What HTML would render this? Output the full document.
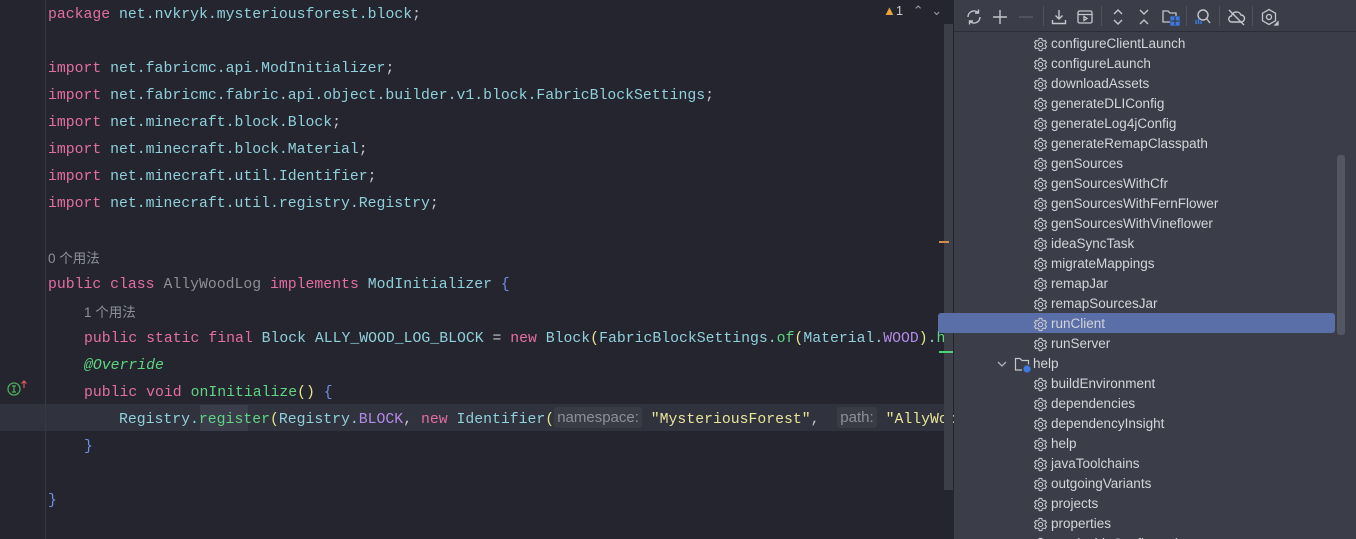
<!DOCTYPE html>
<html style="width:1356px;height:539px;overflow:hidden"><head><meta charset="utf-8"><style>
*{margin:0;padding:0;box-sizing:border-box}
body{width:1356px;height:539px;overflow:hidden;background:#24252e;position:relative;font-family:"Liberation Sans","Noto Sans CJK SC",sans-serif}
#ed{position:absolute;left:0;top:0;width:954px;height:539px;background:#24252e;overflow:hidden}
#gut{position:absolute;left:45px;top:0;width:1px;height:539px;background:#363845}
.ln{position:absolute;left:48px;height:27px;line-height:27px;margin-top:2px;font-family:"Liberation Mono","Noto Sans CJK SC",monospace;font-size:14.8px;color:#8fd0dc;white-space:pre}
.k{color:#e46ea4}.c{color:#8fd0dc}.g{color:#8e8e96}.m{color:#5fd583}.y{color:#e6e48b}.p{color:#b48be8}.b{color:#6f8ee6}.w{color:#c6c6cc}
.s{color:#e8e49a}
.hint{font-family:"Liberation Sans","Noto Sans CJK SC",sans-serif;color:#8d8f99;font-size:13.5px}
.hb{display:inline-block;background:#393b45;border-radius:3px;padding:0 3px;height:21px;line-height:21px;color:#8d8f99;font-family:"Liberation Sans",sans-serif;font-size:15px;vertical-align:1px}
#cur{position:absolute;left:0;top:404px;width:944px;height:27px;background:#30323d}
#sb{position:absolute;left:944px;top:24px;width:9px;height:466px;background:#3c3e48}
#panel{position:absolute;left:954px;top:0;width:402px;height:539px;background:#3b3d48}
#tb{position:absolute;left:0;top:0;width:402px;height:32px;border-bottom:1px solid #2c2d35}
.ic{position:absolute;top:8px}
.sep{position:absolute;top:6px;width:1px;height:20px;background:#4f515c}
.row{position:absolute;height:20px;line-height:20px;font-size:13.5px;color:#d4d5da;white-space:nowrap}
.row svg{position:absolute;left:-18px;top:3px}
#sel{position:absolute;left:938px;top:313px;width:397px;height:20px;background:#5a6ea8;border-radius:3px}
#psb{position:absolute;left:1337px;top:155px;width:8px;height:180px;background:#545663;border-radius:3px}
#tree{position:absolute;left:0;top:0;width:1356px;height:539px;overflow:hidden}
</style></head><body>
<div id="ed">
<div id="cur"></div>
<div style="position:absolute;left:200px;top:405px;width:48px;height:26px;background:#3b3d4a"></div>
<div id="gut"></div>
<div class="ln" style="top:0"><span class="k">package</span> net.nvkryk.mysteriousforest.block<span class="w">;</span></div>
<div class="ln" style="top:54px"><span class="k">import</span> net.fabricmc.api.ModInitializer<span class="w">;</span></div>
<div class="ln" style="top:81px"><span class="k">import</span> net.fabricmc.fabric.api.object.builder.v1.block.FabricBlockSettings<span class="w">;</span></div>
<div class="ln" style="top:108px"><span class="k">import</span> net.minecraft.block.Block<span class="w">;</span></div>
<div class="ln" style="top:135px"><span class="k">import</span> net.minecraft.block.Material<span class="w">;</span></div>
<div class="ln" style="top:162px"><span class="k">import</span> net.minecraft.util.Identifier<span class="w">;</span></div>
<div class="ln" style="top:189px"><span class="k">import</span> net.minecraft.util.registry.Registry<span class="w">;</span></div>
<div class="ln hint" style="top:243px">0 个用法</div>
<div class="ln" style="top:270px"><span class="k">public class</span> <span class="g">AllyWoodLog</span> <span class="k">implements</span> ModInitializer <span class="b">{</span></div>
<div class="ln hint" style="top:297px;left:84px">1 个用法</div>
<div class="ln" style="top:324px;left:84px"><span class="k">public static final</span> Block ALLY_WOOD_LOG_BLOCK <span class="w">=</span> <span class="k">new</span> Block<span class="y">(</span>FabricBlockSettings.<span class="m">of</span><span class="y">(</span>Material.<span class="p">WOOD</span><span class="y">)</span>.<span class="m">h</span></div>
<div class="ln" style="top:351px;left:84px"><span class="m"><i>@Override</i></span></div>
<div class="ln" style="top:378px;left:84px"><span class="k">public void</span> <span class="m">onInitialize</span><span class="y">()</span> <span class="b">{</span></div>
<div class="ln" style="top:405px;left:119px">Registry.<span class="m">register</span><span class="y">(</span>Registry.<span class="p">BLOCK</span><span class="w">,</span> <span class="k">new</span> Identifier<span class="y">(</span><span class="hb">namespace:</span> <span class="s">"MysteriousForest"</span><span class="w">,</span>  <span class="hb">path:</span> <span class="s">"AllyWood</span></div>
<div class="ln" style="top:432px;left:84px"><span class="b">}</span></div>
<div class="ln" style="top:486px"><span class="b">}</span></div>
<svg style="position:absolute;left:6px;top:379px" width="22" height="18"><circle cx="8" cy="10" r="6" fill="none" stroke="#4faa5a" stroke-width="1.3"/><path d="M6 7h4M8 7v6M6 13h4" stroke="#4faa5a" stroke-width="1.2"/><path d="M18 9V2M15.5 4.5L18 2l2.5 2.5" stroke="#e05a5a" stroke-width="1.2" fill="none"/></svg>
<div id="sb"></div>
<div style="position:absolute;left:939px;top:241px;width:10px;height:2px;background:#d98c4a"></div>
<div style="position:absolute;left:939px;top:351px;width:14px;height:2px;background:#4fd07a"></div>
<div style="position:absolute;left:883px;top:3px;font-size:13px;color:#c8c9ce"><span style="color:#e8a33a">▲</span>1 <span style="color:#9a9ba3;margin-left:6px">⌃</span> <span style="color:#9a9ba3;margin-left:4px">⌄</span></div>
</div>
<div id="panel">
<div id="tb">
<svg class="ic" style="left:11px" width="18" height="18" fill="none" stroke="#c5c6cc" stroke-width="1.4"><path d="M3 9a6 6 0 0 1 10.5-4M15 9a6 6 0 0 1-10.5 4"/><path d="M13.5 1.5v3.5H10M4.5 16.5V13H8"/></svg>
<svg class="ic" style="left:37px" width="18" height="18" stroke="#c5c6cc" stroke-width="1.4"><path d="M9 2v14M2 9h14"/></svg>
<svg class="ic" style="left:63px" width="18" height="18" stroke="#5a5c66" stroke-width="1.4"><path d="M2 9h14"/></svg>
<div class="sep" style="left:89px"></div>
<svg class="ic" style="left:96px" width="18" height="18" fill="none" stroke="#c5c6cc" stroke-width="1.4"><path d="M9 2v9M5.5 7.5L9 11l3.5-3.5M2.5 12v3.5h13V12"/></svg>
<svg class="ic" style="left:122px" width="18" height="18" fill="none" stroke="#c5c6cc" stroke-width="1.3"><rect x="2" y="3" width="14" height="12" rx="1.5"/><path d="M2 6.5h14M8 8.5v4l3-2z"/></svg>
<div class="sep" style="left:147px"></div>
<svg class="ic" style="left:155px" width="18" height="18" fill="none" stroke="#c5c6cc" stroke-width="1.4"><path d="M5 6l4-4 4 4M5 12l4 4 4-4"/></svg>
<svg class="ic" style="left:181px" width="18" height="18" fill="none" stroke="#c5c6cc" stroke-width="1.4"><path d="M5 2l4 4 4-4M5 16l4-4 4 4"/></svg>
<svg class="ic" style="left:207px" width="20" height="18" fill="none" stroke="#c5c6cc" stroke-width="1.3"><path d="M9 14H2V3h5l2 2h6v3"/><rect x="10" y="9" width="8" height="8" fill="#3b7ae0" stroke="#3b7ae0"/><path d="M14 9v8M10 13h8" stroke="#3b3d48"/></svg>
<div class="sep" style="left:232px"></div>
<svg class="ic" style="left:239px" width="18" height="18" fill="none" stroke="#c5c6cc" stroke-width="1.4"><circle cx="10" cy="7" r="5"/><path d="M13.5 10.5L17 15"/><path d="M3 16v-4M5.5 16v-6M8 16v-3" stroke="#3b7ae0"/></svg>
<div class="sep" style="left:265px"></div>
<svg class="ic" style="left:273px" width="20" height="18" fill="none" stroke="#c5c6cc" stroke-width="1.4"><path d="M5 14h9a3.5 3.5 0 0 0 0-7 5 5 0 0 0-9.5 1A3 3 0 0 0 5 14z"/><path d="M2 2l15 15"/></svg>
<div class="sep" style="left:298px"></div>
<svg class="ic" style="left:306px" width="20" height="18" fill="none" stroke="#c5c6cc" stroke-width="1.3"><path d="M9 1.5l6.5 3.7v7.6L9 16.5l-6.5-3.7V5.2z"/><circle cx="9" cy="9" r="2.5"/><path d="M15 17l3-3v3z" fill="#c5c6cc"/></svg>
</div>
</div>
<div id="sel"></div>
<div id="psb"></div>
<div id="tree"></div>
<script>
var items=[["configureClientLaunch",1],["configureLaunch",1],["downloadAssets",1],["generateDLIConfig",1],["generateLog4jConfig",1],["generateRemapClasspath",1],["genSources",1],["genSourcesWithCfr",1],["genSourcesWithFernFlower",1],["genSourcesWithVineflower",1],["ideaSyncTask",1],["migrateMappings",1],["remapJar",1],["remapSourcesJar",1],["runClient",1],["runServer",1],["help",0],["buildEnvironment",1],["dependencies",1],["dependencyInsight",1],["help",1],["javaToolchains",1],["outgoingVariants",1],["projects",1],["properties",1],["resolvableConfigurations",1]];
var gear='<svg width="15" height="15" viewBox="0 0 16 16" fill="none" stroke="#c5c6cc" stroke-width="1.2"><path d="M6.6 1.5h2.8l.4 1.9 1.4.8 1.8-.6 1.4 2.4-1.4 1.3v1.4l1.4 1.3-1.4 2.4-1.8-.6-1.4.8-.4 1.9H6.6l-.4-1.9-1.4-.8-1.8.6-1.4-2.4 1.4-1.3V7.3L1.6 6l1.4-2.4 1.8.6 1.4-.8z"/><circle cx="8" cy="8" r="2.3"/></svg>';
var h='';items.forEach(function(it,i){var y=34+i*20;
if(it[1])h+='<div class="row" style="left:1051px;top:'+y+'px">'+gear+it[0]+'</div>';
else h+='<div class="row" style="left:1033px;top:'+y+'px"><svg style="left:-36px;top:5px" width="10" height="10" fill="none" stroke="#b0b1b8" stroke-width="1.3"><path d="M1 3l4 4 4-4"/></svg><svg style="left:-19px;top:2px" width="18" height="17" fill="none" stroke="#c5c6cc" stroke-width="1.2"><path d="M8 14H1.5V2.5h4.5l2 2h6.5v4"/><circle cx="13" cy="13" r="3" fill="#3b7ae0" stroke="#3b7ae0"/></svg>'+it[0]+'</div>';});
document.getElementById('tree').innerHTML=h;
</script>
</body></html>
